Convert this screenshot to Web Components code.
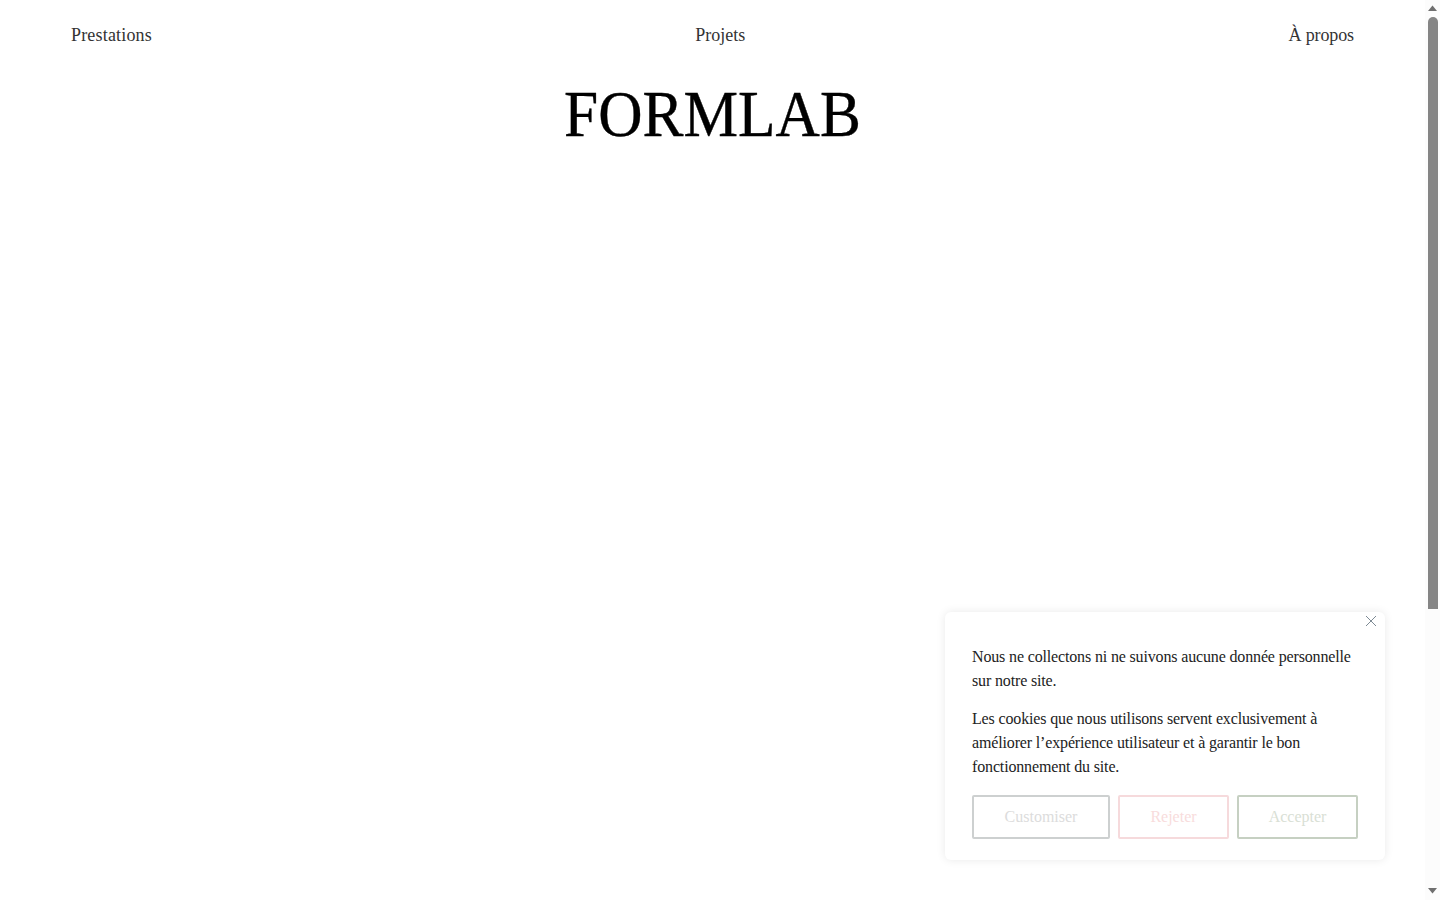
<!DOCTYPE html>
<html lang="fr">
<head>
<meta charset="utf-8">
<title>Formlab</title>
<style>
  html, body { margin: 0; height: 100%; overflow: hidden; background: #fff; }
  body { font-family: "Liberation Serif", "DejaVu Serif", serif; }
</style>
</head>
<body>
<site-page>
  <site-header></site-header>
  <cookie-popup></cookie-popup>
</site-page>

<script>
class SitePage extends HTMLElement {
  constructor() {
    super();
    this.attachShadow({ mode: "open" });
    this.shadowRoot.innerHTML = `
      <style>
        :host { display: flex; width: 1440px; height: 900px; position: relative; overflow: hidden; }
        main { flex: 1; min-width: 0; }
        .bar { width: 15px; background: #fcfcfc; display: flex; flex-direction: column; align-items: center; }
        .arrow { width: 15px; height: 17px; display: block; flex: none; }
        .thumb { width: 10px; height: 592px; margin-left: 1px; background: #858585; border-radius: 5px 5px 0 0; flex: none; }
        .gap { flex: 1; }
        .gap + .arrow { margin-bottom: 1px; }
      </style>
      <main><slot></slot></main>
      <div class="bar">
        <svg class="arrow" viewBox="0 0 15 17"><path d="M3 11 L7.5 5.5 L12 11 Z" fill="#6f6f6f"/></svg>
        <div class="thumb"></div>
        <div class="gap"></div>
        <svg class="arrow" viewBox="0 0 15 17"><path d="M3 6 L12 6 L7.5 11.5 Z" fill="#6f6f6f"/></svg>
      </div>
    `;
  }
}

class SiteHeader extends HTMLElement {
  constructor() {
    super();
    this.attachShadow({ mode: "open" });
    this.shadowRoot.innerHTML = `
      <style>
        :host { display: block; }
        nav {
          display: flex;
          justify-content: space-between;
          padding: 23px 71px 0;
          font-size: 18px;
          line-height: 24px;
          color: #333;
        }
        nav a { color: inherit; text-decoration: none; }
        nav a:first-child { letter-spacing: 0.18px; }
        nav a:last-child { letter-spacing: -0.12px; }
        h1 {
          margin: 29px 0 0;
          text-align: center;
          font-size: 66px;
          line-height: 76px;
          font-weight: 400;
          color: #000;
          transform: scaleX(0.93);
          -webkit-text-stroke: 0.4px #000;
        }
      </style>
      <nav>
        <a href="#">Prestations</a>
        <a href="#">Projets</a>
        <a href="#">À propos</a>
      </nav>
      <h1>FORMLAB</h1>
    `;
  }
}

class CookiePopup extends HTMLElement {
  constructor() {
    super();
    this.attachShadow({ mode: "open" });
    this.shadowRoot.innerHTML = `
      <style>
        :host {
          position: absolute;
          left: 945px;
          top: 612px;
          width: 440px;
          height: 248px;
          box-sizing: border-box;
          padding: 33px 27px 21px;
          background: #fff;
          border-radius: 6px;
          box-shadow: 0 0 10px rgba(0, 0, 0, 0.09);
          color: #222;
          font-size: 16px;
          line-height: 24px;
        }
        p { margin: 0 0 14px; letter-spacing: -0.15px; }
        .close { position: absolute; top: 3px; right: 8px; width: 12px; height: 12px; display: block; }
        .actions { display: flex; gap: 8px; margin-top: 16px; }
        button {
          height: 44px;
          box-sizing: border-box;
          background: #fff;
          border: 2px solid;
          border-radius: 2px;
          padding: 0;
          font: inherit;
        }
        .custom { width: 138px; border-color: #cdd0d0; color: #dcdcdc; }
        .reject { width: 111px; border-color: #f6dadc; color: #f8dcdc; }
        .accept { width: 121px; border-color: #c6d0c2; color: #d9e0d5; }
      </style>
      <svg class="close" viewBox="0 0 12 12"><path d="M1 1 L11 11 M11 1 L1 11" stroke="#7d8a94" stroke-width="1" fill="none"/></svg>
      <p>Nous ne collectons ni ne suivons aucune donnée personnelle<br>sur notre site.</p>
      <p>Les cookies que nous utilisons servent exclusivement à<br>améliorer l’expérience utilisateur et à garantir le bon<br>fonctionnement du site.</p>
      <div class="actions">
        <button class="custom">Customiser</button>
        <button class="reject">Rejeter</button>
        <button class="accept">Accepter</button>
      </div>
    `;
  }
}

customElements.define("site-page", SitePage);
customElements.define("site-header", SiteHeader);
customElements.define("cookie-popup", CookiePopup);
</script>
</body>
</html>
